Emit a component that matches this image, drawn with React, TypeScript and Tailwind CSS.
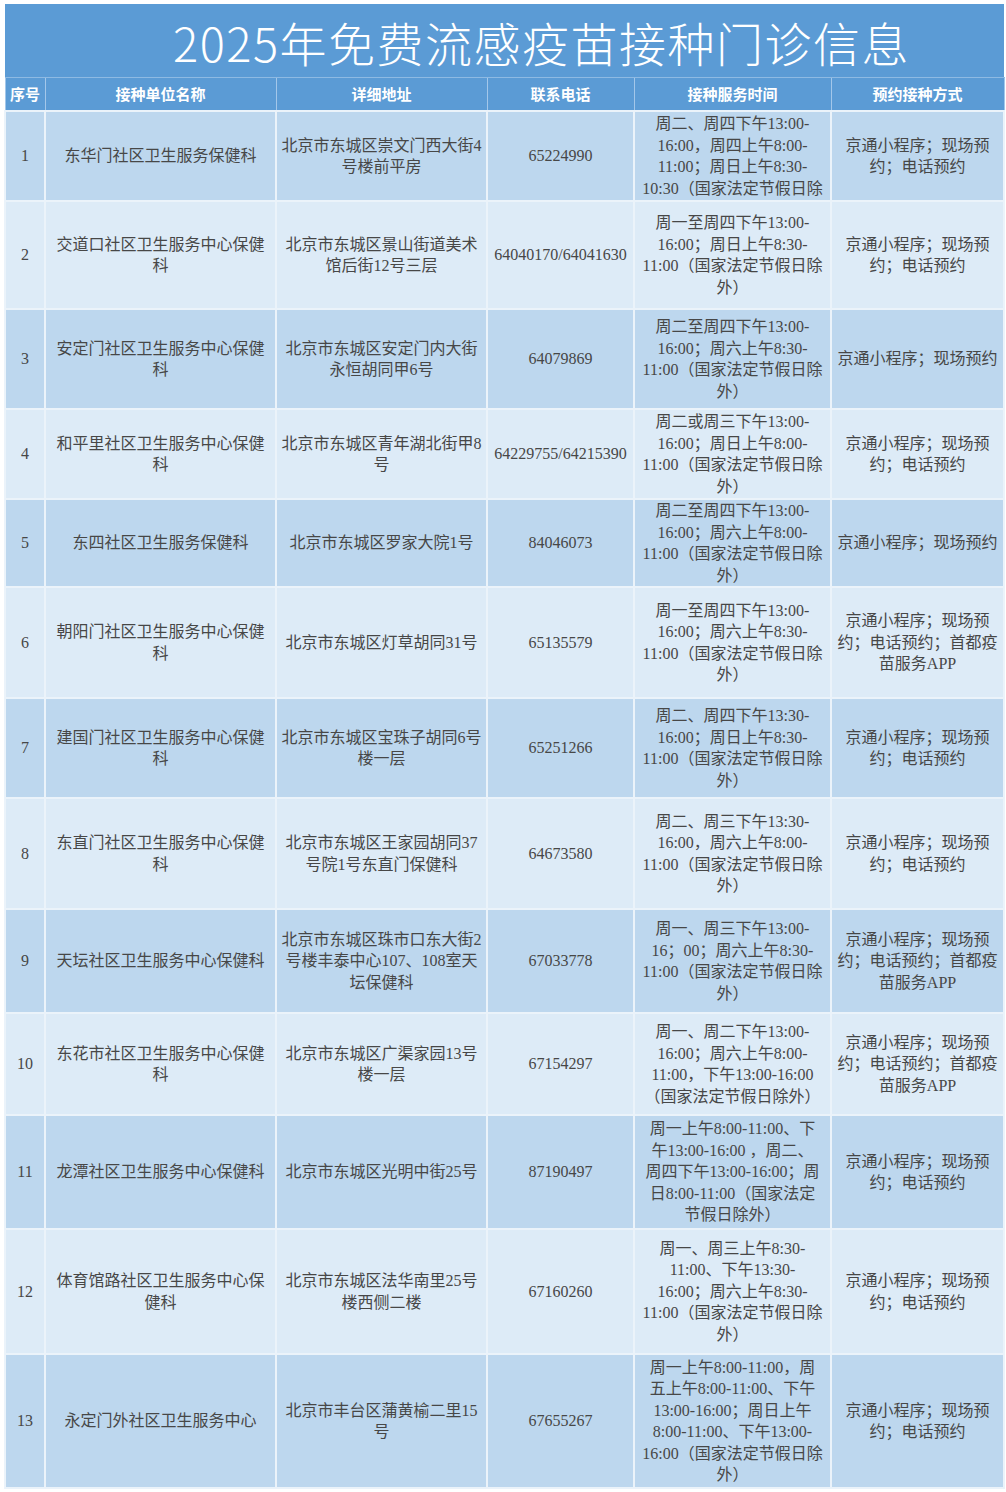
import React from 'react';

type Row = {
  no: string;
  name: string[];
  addr: string[];
  phone: string;
  time: string[];
  way: string[];
  h: string;
};

const rows: Row[] = [
  {
    no: '1',
    name: ['东华门社区卫生服务保健科'],
    addr: ['北京市东城区崇文门西大街4', '号楼前平房'],
    phone: '65224990',
    time: ['周二、周四下午13:00-', '16:00，周四上午8:00-', '11:00；周日上午8:30-', '10:30（国家法定节假日除'],
    way: ['京通小程序；现场预', '约；电话预约'],
    h: 'h-[90px]',
  },
  {
    no: '2',
    name: ['交道口社区卫生服务中心保健', '科'],
    addr: ['北京市东城区景山街道美术', '馆后街12号三层'],
    phone: '64040170/64041630',
    time: ['周一至周四下午13:00-', '16:00；周日上午8:30-', '11:00（国家法定节假日除', '外）'],
    way: ['京通小程序；现场预', '约；电话预约'],
    h: 'h-[108px]',
  },
  {
    no: '3',
    name: ['安定门社区卫生服务中心保健', '科'],
    addr: ['北京市东城区安定门内大街', '永恒胡同甲6号'],
    phone: '64079869',
    time: ['周二至周四下午13:00-', '16:00；周六上午8:30-', '11:00（国家法定节假日除', '外）'],
    way: ['京通小程序；现场预约'],
    h: 'h-[100px]',
  },
  {
    no: '4',
    name: ['和平里社区卫生服务中心保健', '科'],
    addr: ['北京市东城区青年湖北街甲8', '号'],
    phone: '64229755/64215390',
    time: ['周二或周三下午13:00-', '16:00；周日上午8:00-', '11:00（国家法定节假日除', '外）'],
    way: ['京通小程序；现场预', '约；电话预约'],
    h: 'h-[90px]',
  },
  {
    no: '5',
    name: ['东四社区卫生服务保健科'],
    addr: ['北京市东城区罗家大院1号'],
    phone: '84046073',
    time: ['周二至周四下午13:00-', '16:00；周六上午8:00-', '11:00（国家法定节假日除', '外）'],
    way: ['京通小程序；现场预约'],
    h: 'h-[88px]',
  },
  {
    no: '6',
    name: ['朝阳门社区卫生服务中心保健', '科'],
    addr: ['北京市东城区灯草胡同31号'],
    phone: '65135579',
    time: ['周一至周四下午13:00-', '16:00；周六上午8:30-', '11:00（国家法定节假日除', '外）'],
    way: ['京通小程序；现场预', '约；电话预约；首都疫', '苗服务APP'],
    h: 'h-[111px]',
  },
  {
    no: '7',
    name: ['建国门社区卫生服务中心保健', '科'],
    addr: ['北京市东城区宝珠子胡同6号', '楼一层'],
    phone: '65251266',
    time: ['周二、周四下午13:30-', '16:00；周日上午8:30-', '11:00（国家法定节假日除', '外）'],
    way: ['京通小程序；现场预', '约；电话预约'],
    h: 'h-[100px]',
  },
  {
    no: '8',
    name: ['东直门社区卫生服务中心保健', '科'],
    addr: ['北京市东城区王家园胡同37', '号院1号东直门保健科'],
    phone: '64673580',
    time: ['周二、周三下午13:30-', '16:00，周六上午8:00-', '11:00（国家法定节假日除', '外）'],
    way: ['京通小程序；现场预', '约；电话预约'],
    h: 'h-[111px]',
  },
  {
    no: '9',
    name: ['天坛社区卫生服务中心保健科'],
    addr: ['北京市东城区珠市口东大街2', '号楼丰泰中心107、108室天', '坛保健科'],
    phone: '67033778',
    time: ['周一、周三下午13:00-', '16；00；周六上午8:30-', '11:00（国家法定节假日除', '外）'],
    way: ['京通小程序；现场预', '约；电话预约；首都疫', '苗服务APP'],
    h: 'h-[104px]',
  },
  {
    no: '10',
    name: ['东花市社区卫生服务中心保健', '科'],
    addr: ['北京市东城区广渠家园13号', '楼一层'],
    phone: '67154297',
    time: ['周一、周二下午13:00-', '16:00；周六上午8:00-', '11:00，下午13:00-16:00', '（国家法定节假日除外）'],
    way: ['京通小程序；现场预', '约；电话预约；首都疫', '苗服务APP'],
    h: 'h-[102px]',
  },
  {
    no: '11',
    name: ['龙潭社区卫生服务中心保健科'],
    addr: ['北京市东城区光明中街25号'],
    phone: '87190497',
    time: ['周一上午8:00-11:00、下', '午13:00-16:00 ，周二、', '周四下午13:00-16:00；周', '日8:00-11:00（国家法定', '节假日除外）'],
    way: ['京通小程序；现场预', '约；电话预约'],
    h: 'h-[114px]',
  },
  {
    no: '12',
    name: ['体育馆路社区卫生服务中心保', '健科'],
    addr: ['北京市东城区法华南里25号', '楼西侧二楼'],
    phone: '67160260',
    time: ['周一、周三上午8:30-', '11:00、下午13:30-', '16:00；周六上午8:30-', '11:00（国家法定节假日除', '外）'],
    way: ['京通小程序；现场预', '约；电话预约'],
    h: 'h-[125px]',
  },
  {
    no: '13',
    name: ['永定门外社区卫生服务中心'],
    addr: ['北京市丰台区蒲黄榆二里15', '号'],
    phone: '67655267',
    time: ['周一上午8:00-11:00，周', '五上午8:00-11:00、下午', '13:00-16:00；周日上午', '8:00-11:00、下午13:00-', '16:00（国家法定节假日除', '外）'],
    way: ['京通小程序；现场预', '约；电话预约'],
    h: 'h-[134px]',
  },
];

const headers = ['序号', '接种单位名称', '详细地址', '联系电话', '接种服务时间', '预约接种方式'];

const Lines = ({ lines }: { lines: string[] }) => (
  <>
    {lines.map((l, i) => (
      <div key={i} className="whitespace-nowrap">
        {l}
      </div>
    ))}
  </>
);

const App: React.FC = () => {
  return (
    <div className="w-[1006px] h-[1492px] bg-white pt-1 pl-1 font-['Liberation_Serif','Noto_Sans_CJK_SC',serif]">
      <table className="table-fixed border-collapse w-[999px]">
        <colgroup>
          <col className="w-[40px]" />
          <col className="w-[231px]" />
          <col className="w-[211px]" />
          <col className="w-[147px]" />
          <col className="w-[197px]" />
          <col className="w-[173px]" />
        </colgroup>
        <thead>
          {/* 标题 */}
          <tr className="h-[73px]">
            <th
              colSpan={6}
              className="bg-[#5b9bd5] text-white text-[47px] leading-[60px] font-light tracking-[1.5px] pl-[74px] pt-1 border-b border-[#8ebae3] whitespace-nowrap font-['Noto_Sans_CJK_SC','Noto_Sans',sans-serif]"
            >
              2025年免费流感疫苗接种门诊信息
            </th>
          </tr>
          <tr className="h-[34px]">
            {headers.map((h) => (
              <th
                key={h}
                className="bg-[#5b9bd5] text-white text-[15px] font-bold border-x border-[#a3c7ea] px-0 whitespace-nowrap font-['Noto_Sans_CJK_SC',sans-serif]"
              >
                {h}
              </th>
            ))}
          </tr>
        </thead>
        <tbody className="text-[16px] leading-[21.5px] text-[#474747]">
          {rows.map((r, i) => (
            <tr key={r.no} className={`${r.h} ${i % 2 === 0 ? 'bg-[#bdd7ee]' : 'bg-[#ddebf7]'}`}>
              <td className="border-2 border-[#ebf3fa] text-center px-0">{r.no}</td>
              <td className="border-2 border-[#ebf3fa] text-center px-1">
                <Lines lines={r.name} />
              </td>
              <td className="border-2 border-[#ebf3fa] text-center px-1">
                <Lines lines={r.addr} />
              </td>
              <td className="border-2 border-[#ebf3fa] text-center px-0">{r.phone}</td>
              <td className="border-2 border-[#ebf3fa] text-center px-1">
                <Lines lines={r.time} />
              </td>
              <td className="border-2 border-[#ebf3fa] text-center px-1">
                <Lines lines={r.way} />
              </td>
            </tr>
          ))}
        </tbody>
      </table>
    </div>
  );
};

export default App;
